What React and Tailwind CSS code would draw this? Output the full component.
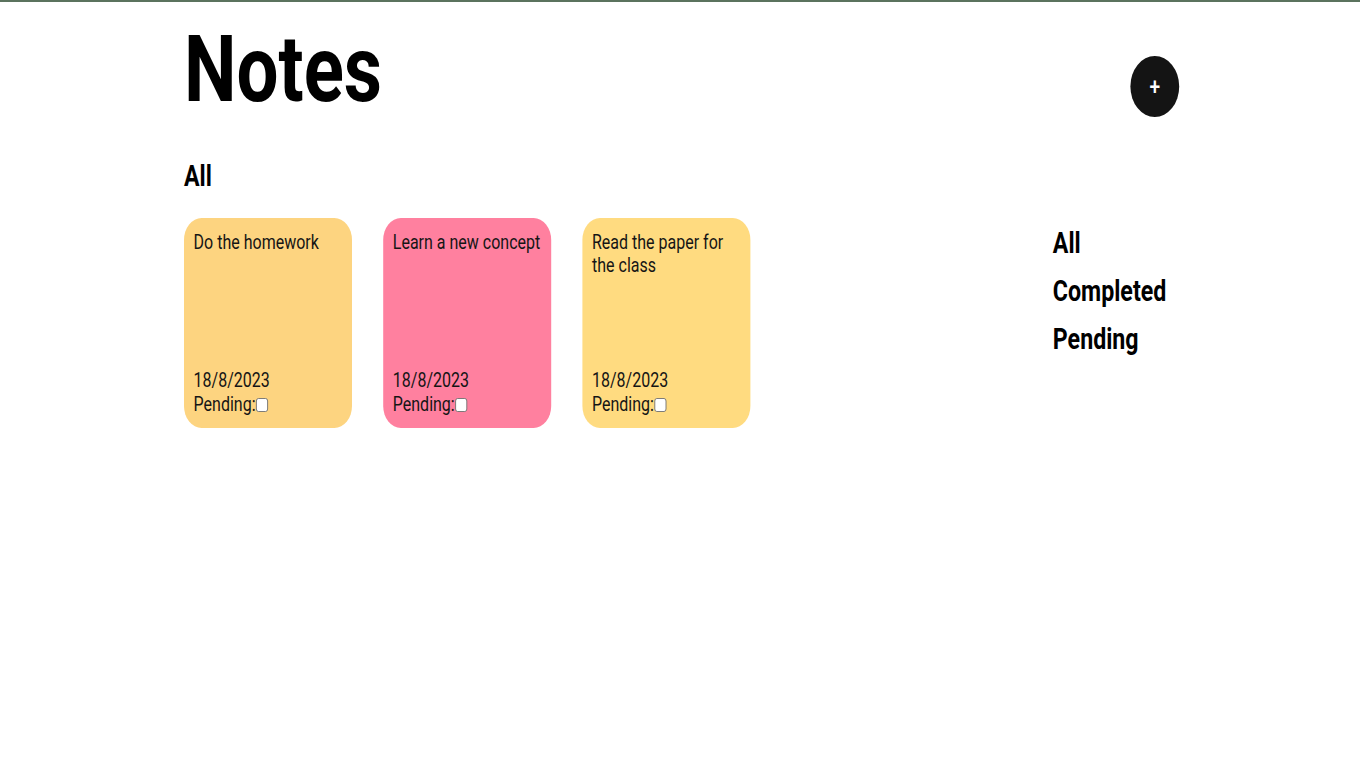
export default function App() {
  const notes = [
    { title: "Do the homework", date: "18/8/2023", bg: "bg-[#fdd480]" },
    { title: "Learn a new concept", date: "18/8/2023", bg: "bg-[#ff809f]" },
    { title: "Read the paper for the class", date: "18/8/2023", bg: "bg-[#ffdb80]" },
  ];
  return (
    <div className="w-[1360px] h-[765px] overflow-hidden bg-white">
      <div className="w-[1700px] h-[765px] origin-top-left scale-x-[0.8] border-t-2 border-[#5b735e] font-[family-name:Roboto,sans-serif] text-black">
        <div className="ml-[230px] w-[1244px]">
          <header className="flex justify-between items-start">
            <h1 className="mt-[13px] text-[93px] font-bold leading-[110px]">Notes</h1>
            <button className="mt-[54px] w-[61px] h-[61px] rounded-full bg-[#141414] text-white text-2xl font-medium flex items-center justify-center leading-none">
              +
            </button>
          </header>
          <div className="flex justify-between">
            <main>
              <h2 className="mt-[34px] text-[29px] font-bold leading-[34px]">All</h2>
              <div className="mt-[25px] flex gap-[39px]">
                {notes.map((n) => (
                  <div
                    key={n.title}
                    className={`w-[210px] h-[210px] rounded-[22px] px-3 pt-[13px] pb-3 flex flex-col justify-between text-[20px] leading-[23.4px] text-[#151515] ${n.bg}`}
                  >
                    <p>{n.title}</p>
                    <div>
                      <p className="flex items-end">{n.date}</p>
                      <p className="flex items-end">
                        Pending:
                        <input
                          type="checkbox"
                          className="appearance-none ml-px mb-[4px] w-[15px] h-[14px] rounded-[3px] border border-[#6f6f6f] bg-white"
                        />
                      </p>
                    </div>
                  </div>
                ))}
              </div>
            </main>
            <aside className="w-[158px] mt-[101px] flex flex-col gap-[14px] text-[29px] font-bold leading-[34px]">
              <span>All</span>
              <span>Completed</span>
              <span>Pending</span>
            </aside>
          </div>
        </div>
      </div>
    </div>
  );
}
